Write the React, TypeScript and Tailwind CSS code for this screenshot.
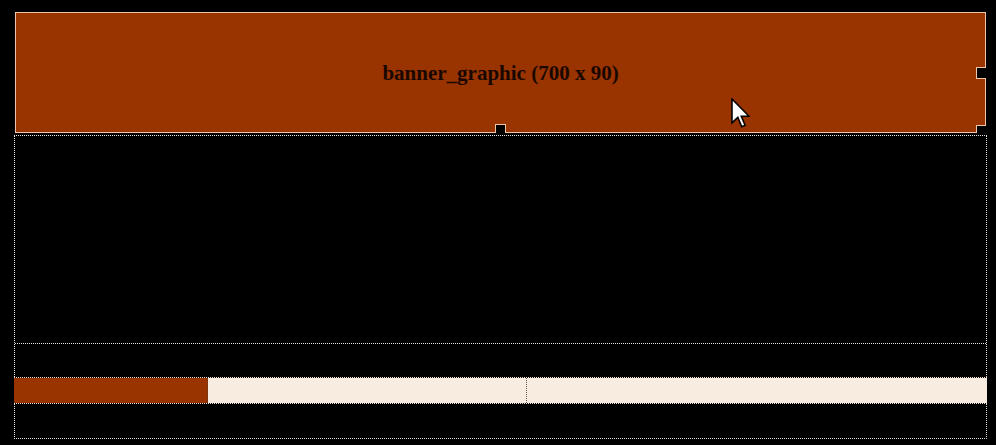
import React from 'react';

const BROWN = 'bg-[#993300]';

function Cursor() {
  return (
    <svg
      className="absolute left-[731px] top-[98px]"
      width="19"
      height="30"
      viewBox="0 0 12 19"
    >
      <path
        d="M0.6 0.6 L0.6 15.8 L4.3 12.3 L6.8 18.2 L8.9 17.3 L6.5 11.6 L11.4 11.6 Z"
        fill="#ffffff"
        stroke="#000000"
        strokeWidth="1"
        strokeLinejoin="miter"
      />
    </svg>
  );
}

function Banner() {
  return (
    <div className={`relative ml-px w-[971px] h-[121px] ${BROWN} border border-[#f0c4a8] flex items-center justify-center`}>
      <span
        className="text-[21px] font-bold text-[#1a0800] leading-none mt-[1px]"
        style={{ fontFamily: '"Liberation Serif", "Times New Roman", serif' }}
      >
        banner_graphic (700 x 90)
      </span>
      {/* resize handles */}
      <div className="absolute -right-px top-[54px] w-[10px] h-[12px] bg-black border-l border-y border-[#f0c4a8]" />
      <div className="absolute left-[479px] -bottom-px w-[11px] h-[9px] bg-black border-x border-t border-[#f0c4a8]" />
      <div className="absolute -right-px -bottom-px w-[10px] h-[8px] bg-black border-l border-t border-[#f0c4a8]" />
    </div>
  );
}

export default function App() {
  return (
    <div className="relative w-[996px] h-[445px] bg-black pt-[12px] pl-[14px] overflow-hidden">
      <div className="w-[973px]">
        <Banner />
        <div className="mt-[2px] border border-dotted border-[#e0e0e0] h-[304px] flex flex-col">
          <div className="h-[208px] border-b border-dotted border-[#e0e0e0]" />
          <div className="mt-[33px] -mx-px flex h-[27px] border-y border-dotted border-[#f0dcc8]">
            <div className={`w-[194px] ${BROWN} border-r border-dotted border-[#5a3a20]`} />
            <div className="flex-1 flex bg-[#f8ece0]">
              <div className="w-[319px] border-r border-dotted border-[#6a5a4a]" />
              <div className="flex-1" />
            </div>
          </div>
        </div>
      </div>
      <Cursor />
    </div>
  );
}
